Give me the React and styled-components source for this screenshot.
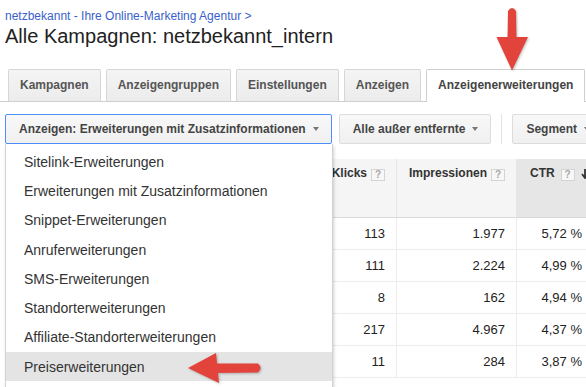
import React from 'react';
import styled, { createGlobalStyle } from 'styled-components';

const Global = createGlobalStyle`
  html, body { margin: 0; padding: 0; background: #fff; }
  body { font-family: "Liberation Sans", Arial, sans-serif; }
`;

const Page = styled.div`
  position: relative;
  width: 586px;
  height: 387px;
  overflow: hidden;
  padding-top: 9px;
  box-sizing: border-box;
`;

const Header = styled.header`
  padding-left: 5px;
`;

const Breadcrumb = styled.a`
  display: block;
  font-size: 12px;
  line-height: 14px;
  color: #3a5fcd;
  text-decoration: none;
`;

const Title = styled.h1`
  margin: 2px 0 0;
  font-size: 20px;
  line-height: 23px;
  font-weight: normal;
  color: #222;
  white-space: nowrap;
`;

const TabBar = styled.nav`
  display: flex;
  align-items: flex-end;
  gap: 5px;
  height: 32px;
  margin-top: 21px;
  padding-left: 8px;
  border-bottom: 1px solid #cfcfcf;
`;

const Tab = styled.div`
  flex: none;
  box-sizing: border-box;
  height: ${p => (p.$active ? '33px' : '32px')};
  margin-bottom: ${p => (p.$active ? '-1px' : '0')};
  padding: 0 11px;
  border: 1px solid ${p => (p.$active ? '#cfcfcf' : '#d6d6d6')};
  border-bottom: none;
  border-radius: 2px 2px 0 0;
  background: ${p => (p.$active ? '#fff' : 'linear-gradient(#f4f4f4, #ececec)')};
  color: ${p => (p.$active ? '#444' : '#555')};
  font-size: 12px;
  font-weight: bold;
  line-height: 31px;
  white-space: nowrap;
`;

const Content = styled.section`
  position: relative;
  padding: 12px 0 0 5px;
`;

const Toolbar = styled.div`
  display: flex;
  align-items: stretch;
  height: 30px;
`;

const Button = styled.div`
  flex: none;
  display: flex;
  align-items: center;
  gap: 7px;
  box-sizing: border-box;
  height: 30px;
  padding: 0 12px 0 13px;
  margin-right: ${p => p.$mr || 0}px;
  border: 1px solid ${p => (p.$focus ? '#4d90fe' : '#dcdcdc')};
  border-radius: 2px;
  background: linear-gradient(#f8f8f8, #f0f0f0);
  color: #444;
  font-size: 12px;
  font-weight: bold;
  white-space: nowrap;
`;

const Caret = styled.span`
  width: 0;
  height: 0;
  border-left: 3.5px solid transparent;
  border-right: 3.5px solid transparent;
  border-top: 4px solid #777;
`;

const Separator = styled.div`
  flex: none;
  width: 1px;
  margin: 0 10px 0 3px;
  background: #e3e3e3;
`;

const Table = styled.div`
  display: grid;
  grid-template-columns: 328px 64px 120px 77px;
  margin-top: 15px;
`;

const HeadCell = styled.div`
  box-sizing: border-box;
  height: 59px;
  display: flex;
  align-items: flex-start;
  justify-content: ${p => (p.$left ? 'flex-start' : 'flex-end')};
  gap: ${p => (p.$left ? '6px' : '4px')};
  padding: 6px 11px 0 ${p => (p.$left ? '13px' : '0')};
  background: ${p => (p.$sorted ? '#e6e6e6' : '#f5f5f5')};
  border-bottom: 1px solid #dadada;
  border-right: 1px solid #e6e6e6;
  color: #333;
  font-size: 12px;
  font-weight: bold;
  line-height: 16px;
  white-space: nowrap;
`;

const Help = styled.span`
  flex: none;
  display: inline-flex;
  align-items: center;
  justify-content: center;
  box-sizing: border-box;
  width: 14px;
  height: 12px;
  margin-top: 4px;
  border: 1px solid #d4d4d4;
  background: #f7f7f7;
  color: #a8a8a8;
  font-size: 10px;
  font-weight: bold;
  line-height: 1;
`;

const SortIcon = styled.svg`
  flex: none;
  margin-top: 4px;
`;

const Cell = styled.div`
  box-sizing: border-box;
  height: 32px;
  padding-right: 11px;
  border-bottom: 1px solid #ececec;
  border-right: 1px solid #ececec;
  text-align: right;
  color: #222;
  font-size: 13px;
  line-height: 31px;
  white-space: nowrap;
`;

const Menu = styled.ul`
  position: absolute;
  top: 42px;
  left: 5px;
  width: 328px;
  box-sizing: border-box;
  margin: 0;
  padding: 3px 0 8px;
  list-style: none;
  background: #fff;
  border: 1px solid #d2d2d2;
  border-top: none;
  box-shadow: 1px 2px 3px rgba(0, 0, 0, 0.18);
`;

const MenuItem = styled.li`
  display: flex;
  align-items: center;
  height: 29.3px;
  padding-left: 18px;
  background: ${p => (p.$active ? '#e4e4e4' : 'transparent')};
  color: #333;
  font-size: 14px;
  white-space: nowrap;
`;

const Overlay = styled.svg`
  position: absolute;
  left: ${p => p.$x}px;
  top: ${p => p.$y}px;
  overflow: visible;
  filter: drop-shadow(1px 1px 1px rgba(0, 0, 0, 0.25));
`;

const tabs = ['Kampagnen', 'Anzeigengruppen', 'Einstellungen', 'Anzeigen', 'Anzeigenerweiterungen'];

const menuItems = [
  'Sitelink-Erweiterungen',
  'Erweiterungen mit Zusatzinformationen',
  'Snippet-Erweiterungen',
  'Anruferweiterungen',
  'SMS-Erweiterungen',
  'Standorterweiterungen',
  'Affiliate-Standorterweiterungen',
  'Preiserweiterungen',
];

const rows = [
  ['113', '1.977', '5,72 %'],
  ['111', '2.224', '4,99 %'],
  ['8', '162', '4,94 %'],
  ['217', '4.967', '4,37 %'],
  ['11', '284', '3,87 %'],
];

export default function App() {
  return (
    <>
      <Global />
      <Page>
        <Header>
          <Breadcrumb>netzbekannt - Ihre Online-Marketing Agentur &gt;</Breadcrumb>
          <Title>Alle Kampagnen: netzbekannt_intern</Title>
        </Header>

        <TabBar>
          {tabs.map((t, i) => (
            <Tab key={t} $active={i === tabs.length - 1}>{t}</Tab>
          ))}
        </TabBar>

        <Content>
          <Toolbar>
            <Button $focus $mr={7}>
              Anzeigen: Erweiterungen mit Zusatzinformationen <Caret />
            </Button>
            <Button $mr={7}>
              Alle außer entfernte <Caret />
            </Button>
            <Separator />
            <Button>
              Segment <Caret />
            </Button>
          </Toolbar>

          <Table>
            <HeadCell />
            <HeadCell>Klicks <Help>?</Help></HeadCell>
            <HeadCell>Impressionen <Help>?</Help></HeadCell>
            <HeadCell $sorted $left>
              CTR <Help>?</Help>
              <SortIcon width="8" height="10" viewBox="0 0 8 10">
                <path d="M4 0v8M1 5l3 4 3-4" stroke="#333" strokeWidth="1.8" fill="none" />
              </SortIcon>
            </HeadCell>
            {rows.map((r, i) => (
              <React.Fragment key={i}>
                <Cell />
                <Cell>{r[0]}</Cell>
                <Cell>{r[1]}</Cell>
                <Cell>{r[2]}</Cell>
              </React.Fragment>
            ))}
          </Table>

          <Menu>
            {menuItems.map((m, i) => (
              <MenuItem key={m} $active={i === menuItems.length - 1}>{m}</MenuItem>
            ))}
          </Menu>
        </Content>

        <Overlay $x={494} $y={5} width="36" height="68" viewBox="494 5 36 68">
          <path d="M508 11 Q512 5 516 11 L516.5 39 L507.5 39 Z" fill="#e2433b" />
          <path d="M496.5 37 L528 37 L512 70.5 Z" fill="#e2433b" />
        </Overlay>

        <Overlay $x={186} $y={350} width="80" height="36" viewBox="186 350 80 36">
          <path d="M188 368 L216 353 L219 383 Z" fill="#e2433b" />
          <path d="M215 363.5 L258 363.5 Q263 368 258 372.5 L215 373 Z" fill="#e2433b" />
        </Overlay>
      </Page>
    </>
  );
}
